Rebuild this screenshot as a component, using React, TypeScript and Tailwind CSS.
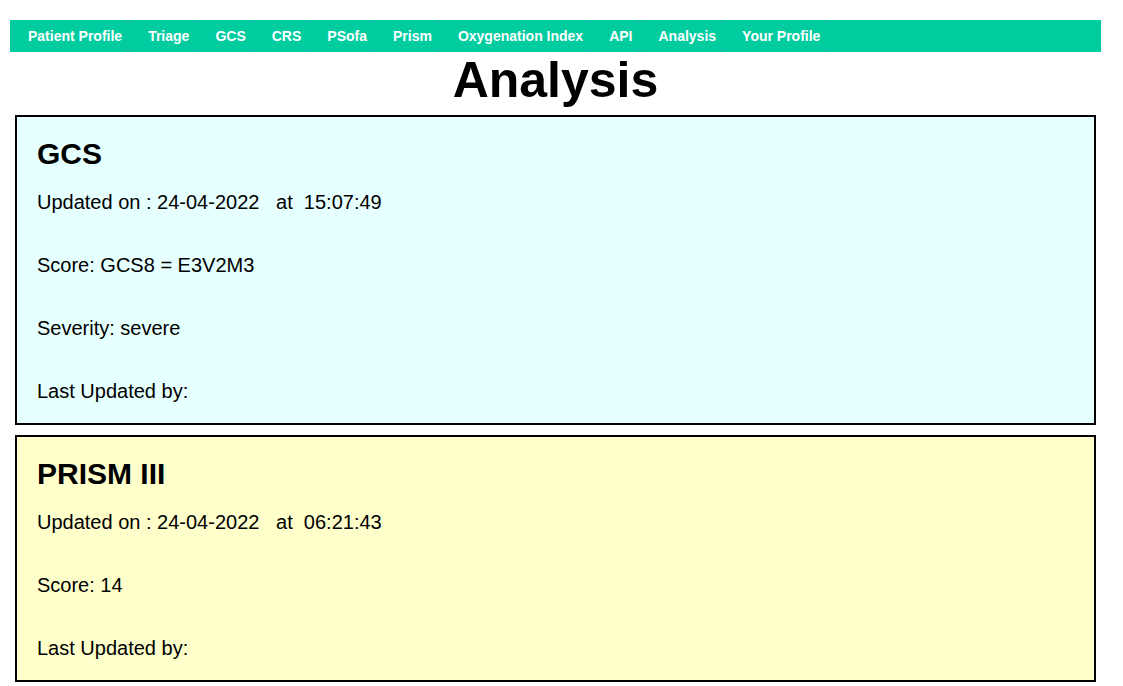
import React from "react";

const links = [
  "Patient Profile",
  "Triage",
  "GCS",
  "CRS",
  "PSofa",
  "Prism",
  "Oxygenation Index",
  "API",
  "Analysis",
  "Your Profile",
];

function Mark({ bottom }: { bottom?: boolean }) {
  return (
    <svg
      width="6"
      height="3"
      viewBox="0 0 6 3"
      className={`absolute right-[4px] ${bottom ? "bottom-0" : "top-0"}`}
    >
      {bottom ? (
        <polyline points="0,3 3,0.5 6,3" fill="none" stroke="#3aa6c8" strokeWidth="1" opacity="0.6" />
      ) : (
        <polyline points="0,0 3,2.5 6,0" fill="none" stroke="#3aa6c8" strokeWidth="1" opacity="0.6" />
      )}
    </svg>
  );
}

function Card({
  title,
  bg,
  lines,
}: {
  title: string;
  bg: string;
  lines: string[];
}) {
  return (
    <div className={`mx-[5px] border-2 border-black ${bg} px-[20px] pt-[21px] pb-[20px]`}>
      <h2 className="text-[30px] font-bold leading-[32px] text-black">{title}</h2>
      <div className="mt-[21px] flex flex-col gap-[40px]">
        {lines.map((l, i) => (
          <p key={i} className="whitespace-pre text-[20px] leading-[23px] text-black">
            {l}
          </p>
        ))}
      </div>
    </div>
  );
}

export default function App() {
  return (
    <div
      className="min-h-[686px] bg-white pt-[20px]"
      style={{ fontFamily: '"Liberation Sans", Arial, sans-serif' }}
    >
      <div className="mx-[10px] w-[1091px]">
        <nav className="flex h-[32px] items-center bg-[#00cca0] pl-[5px]">
          {links.map((l) => (
            <a
              key={l}
              className="relative flex h-[32px] items-center px-[13px] text-[14px] font-bold text-white"
            >
              {l}
              <Mark />
              <Mark bottom />
            </a>
          ))}
        </nav>
        <h1 className="text-center text-[50px] font-bold leading-[56px] text-black">
          Analysis
        </h1>
        <div className="mt-[7px] flex flex-col gap-[10px]">
          <Card
            title="GCS"
            bg="bg-[#e6ffff]"
            lines={[
              "Updated on : 24-04-2022   at  15:07:49",
              "Score: GCS8 = E3V2M3",
              "Severity: severe",
              "Last Updated by:",
            ]}
          />
          <Card
            title="PRISM III"
            bg="bg-[#ffffcc]"
            lines={[
              "Updated on : 24-04-2022   at  06:21:43",
              "Score: 14",
              "Last Updated by:",
            ]}
          />
        </div>
      </div>
    </div>
  );
}
